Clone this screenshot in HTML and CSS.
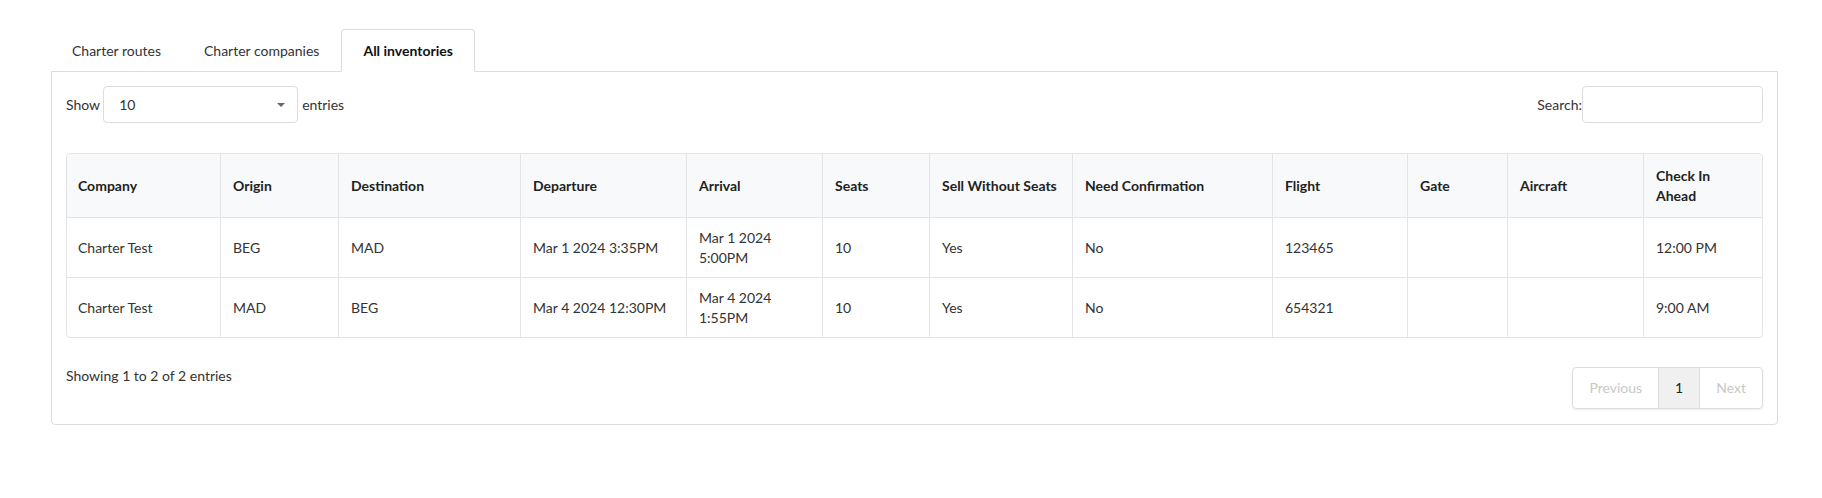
FILE: index.html
```html
<!DOCTYPE html>
<html lang="en">
<head>
<meta charset="utf-8">
<title>All inventories</title>
<link rel="stylesheet" href="styles.css">
</head>
<body>
<div class="page">
  <ul class="tabs">
    <li class="tab">Charter routes</li>
    <li class="tab">Charter companies</li>
    <li class="tab active">All inventories</li>
  </ul>
  <div class="panel">
    <div class="toolbar">
      <div class="length">
        <span>Show</span>
        <div class="select"><span>10</span><i class="caret"></i></div>
        <span>entries</span>
      </div>
      <div class="search">
        <span>Search:</span>
        <div class="input"></div>
      </div>
    </div>
    <div class="table-wrap">
      <table class="grid">
        <colgroup>
          <col class="c1"><col class="c2"><col class="c3"><col class="c4"><col class="c5"><col class="c6">
          <col class="c7"><col class="c8"><col class="c9"><col class="c10"><col class="c11"><col class="c12">
        </colgroup>
        <thead>
          <tr>
            <th>Company</th><th>Origin</th><th>Destination</th><th>Departure</th><th>Arrival</th><th>Seats</th>
            <th>Sell Without Seats</th><th>Need Confirmation</th><th>Flight</th><th>Gate</th><th>Aircraft</th><th>Check In Ahead</th>
          </tr>
        </thead>
        <tbody>
          <tr>
            <td>Charter Test</td><td>BEG</td><td>MAD</td><td>Mar 1 2024 3:35PM</td><td>Mar 1 2024 5:00PM</td><td>10</td>
            <td>Yes</td><td>No</td><td>123465</td><td></td><td></td><td>12:00 PM</td>
          </tr>
          <tr>
            <td>Charter Test</td><td>MAD</td><td>BEG</td><td>Mar 4 2024 12:30PM</td><td>Mar 4 2024 1:55PM</td><td>10</td>
            <td>Yes</td><td>No</td><td>654321</td><td></td><td></td><td>9:00 AM</td>
          </tr>
        </tbody>
      </table>
    </div>
    <div class="footer">
      <div class="info">Showing 1 to 2 of 2 entries</div>
      <div class="pager">
        <span class="pg disabled">Previous</span>
        <span class="pg current">1</span>
        <span class="pg disabled">Next</span>
      </div>
    </div>
  </div>
</div>
</body>
</html>
```

FILE: styles.css
```css
* { box-sizing: border-box; }

html, body {
  margin: 0;
  background: #ffffff;
}

body {
  font-family: Lato, "Open Sans", "Liberation Sans", sans-serif;
  font-size: 14px;
  line-height: 20px;
  color: #333333;
}

.page {
  margin: 29px 44px 0 51px;
}

.tabs {
  list-style: none;
  margin: 0;
  padding: 0;
  display: flex;
}

.tab {
  padding: 11px 20px 10px;
  margin-right: 1px;
  border: 1px solid transparent;
  border-radius: 4px 4px 0 0;
  margin-bottom: -1px;
  color: #333333;
  position: relative;
  z-index: 1;
}

.tab.active {
  border-color: #dddddd;
  border-bottom-color: #ffffff;
  background: #ffffff;
  font-weight: 700;
  color: #111111;
  padding-left: 21px;
  padding-right: 21px;
}

.panel {
  border: 1px solid #dddddd;
  border-radius: 0 0 4px 4px;
  padding: 14px 14px 15px;
}

.toolbar {
  display: flex;
  justify-content: space-between;
  align-items: center;
}

.length {
  display: flex;
  align-items: center;
}

.select {
  width: 195px;
  height: 37px;
  margin: 0 4px 0 3px;
  border: 1px solid #dddddd;
  border-radius: 4px;
  padding: 0 12px 0 15px;
  display: flex;
  align-items: center;
  justify-content: space-between;
  color: #333333;
}

.caret {
  width: 0;
  height: 0;
  border-left: 4px solid transparent;
  border-right: 4px solid transparent;
  border-top: 4px solid #666666;
}

.search {
  display: flex;
  align-items: center;
}

.input {
  width: 181px;
  height: 37px;
  border: 1px solid #dddddd;
  border-radius: 4px;
}

.table-wrap {
  margin-top: 30px;
  border: 1px solid #e2e4e7;
  border-radius: 4px;
  overflow: hidden;
}

.grid {
  width: 100%;
  table-layout: fixed;
  border-collapse: separate;
  border-spacing: 0;
}

.c1 { width: 153px; }
.c2 { width: 118px; }
.c3 { width: 182px; }
.c4 { width: 166px; }
.c5 { width: 136px; }
.c6 { width: 107px; }
.c7 { width: 143px; }
.c8 { width: 200px; }
.c9 { width: 135px; }
.c10 { width: 100px; }
.c11 { width: 136px; }
.c12 { width: 120px; }

.grid th,
.grid td {
  text-align: left;
  vertical-align: middle;
  border-left: 1px solid #e2e4e7;
  line-height: 19.5px;
}

.grid th:first-child,
.grid td:first-child {
  border-left: 0;
  padding-left: 11px;
}

.grid th {
  background: #f8f9fa;
  font-weight: 700;
  color: #222222;
  padding: 12px 12px;
}

.grid td {
  border-top: 1px solid #e2e4e7;
  padding: 10px 12px;
  color: #333333;
}

.footer {
  display: flex;
  justify-content: space-between;
  align-items: flex-start;
  margin-top: 29px;
}

.info {
  margin-top: -1px;
}

.pager {
  display: flex;
  border: 1px solid #dddddd;
  border-radius: 4px;
  box-shadow: 0 1px 2px rgba(0, 0, 0, 0.08);
  overflow: hidden;
}

.pg {
  height: 40px;
  line-height: 40px;
  padding: 0 16px;
  border-left: 1px solid #dddddd;
}

.pg:first-child {
  border-left: 0;
}

.pg.disabled {
  color: #c8c8c8;
}

.pg.current {
  background: #f0f0f0;
  color: #222222;
}
```
